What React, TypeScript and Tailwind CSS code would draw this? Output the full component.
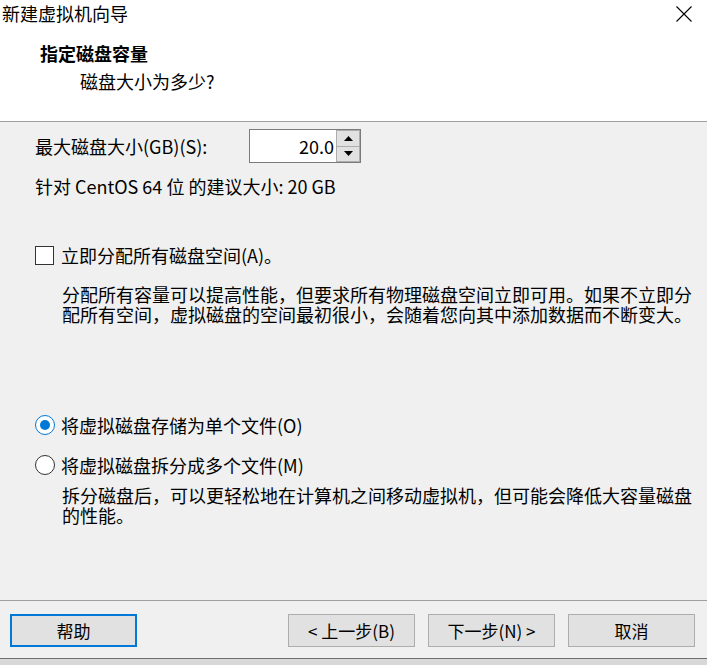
import React from 'react';

const Btn: React.FC<{ label: string; focused?: boolean }> = ({ label, focused }) => (
  <button
    className={
      focused
        ? 'w-[127px] h-[33px] bg-[#e1e1e1] border-2 border-[#0078d7] text-[17px] text-black flex items-center justify-center'
        : 'w-[127px] h-[33px] bg-[#e1e1e1] border border-[#adadad] text-[17px] text-black flex items-center justify-center'
    }
  >
    {label}
  </button>
);

const Radio: React.FC<{ checked?: boolean }> = ({ checked }) => (
  <span
    className={
      checked
        ? 'w-[20px] h-[20px] rounded-full border border-[#0078d7] bg-white flex items-center justify-center'
        : 'w-[20px] h-[20px] rounded-full border border-[#333333] bg-white flex items-center justify-center'
    }
  >
    {checked && <span className="w-[10px] h-[10px] rounded-full bg-[#0078d7]" />}
  </span>
);

export default function App() {
  return (
    <div className="w-[707px] h-[665px] flex flex-col bg-[#f0f0f0] text-black font-['Noto_Sans_CJK_SC','Noto_Sans',sans-serif]">
      {/* header */}
      <div className="h-[121px] bg-white flex flex-col">
        <div className="h-[27px] flex items-center justify-between pl-[2px] pr-[15px]">
          <span className="text-[18px] leading-[27px]">新建虚拟机向导</span>
          <svg width="16" height="16" viewBox="0 0 16 16" className="mt-[1px]">
            <path d="M0.5 0.5 L15.5 15.5 M15.5 0.5 L0.5 15.5" stroke="#000" strokeWidth="1.1" fill="none" />
          </svg>
        </div>
        <div className="pl-[40px] mt-[14px] text-[18px] font-bold leading-[24px]">指定磁盘容量</div>
        <div className="pl-[80px] mt-[4px] text-[18px] leading-[24px]">磁盘大小为多少?</div>
      </div>
      <div className="h-px bg-[#a0a0a0]" />

      {/* content */}
      <div className="flex-1 flex flex-col pl-[35px] text-[18px]">
        <div className="mt-[7px] flex items-center h-[34px]">
          <span className="w-[214px] leading-[20px]">最大磁盘大小(GB)(S):</span>
          <div className="flex h-[34px] w-[112px] border border-[#7a7a7a] bg-white">
            <div className="flex-1 flex items-center justify-end pr-[2px] text-[18px]">20.0</div>
            <div className="w-[24px] flex flex-col">
              <div className="flex-1 bg-[#e1e1e1] border border-[#adadad] flex items-center justify-center">
                <svg width="9" height="5" viewBox="0 0 9 5"><path d="M0 5 L4.5 0 L9 5 Z" fill="#000" /></svg>
              </div>
              <div className="flex-1 bg-[#e1e1e1] border border-[#adadad] border-t-0 flex items-center justify-center">
                <svg width="9" height="5" viewBox="0 0 9 5"><path d="M0 0 L4.5 5 L9 0 Z" fill="#000" /></svg>
              </div>
            </div>
          </div>
        </div>

        <div className="mt-[13px] leading-[20px]">针对 CentOS 64 位 的建议大小: 20 GB</div>

        <div className="mt-[49px] flex items-center gap-[7px] h-[20px]">
          <span className="w-[19px] h-[19px] border border-[#333333] bg-white" />
          <span className="leading-[20px]">立即分配所有磁盘空间(A)。</span>
        </div>
        <div className="mt-[19px] pl-[27px] leading-[20px] whitespace-nowrap">
          <div>分配所有容量可以提高性能，但要求所有物理磁盘空间立即可用。如果不立即分</div>
          <div>配所有空间，虚拟磁盘的空间最初很小，会随着您向其中添加数据而不断变大。</div>
        </div>

        <div className="mt-[91px] flex items-center gap-[6px] h-[20px]">
          <Radio checked />
          <span className="leading-[20px]">将虚拟磁盘存储为单个文件(O)</span>
        </div>
        <div className="mt-[20px] flex items-center gap-[6px] h-[20px]">
          <Radio />
          <span className="leading-[20px]">将虚拟磁盘拆分成多个文件(M)</span>
        </div>
        <div className="mt-[10px] pl-[27px] leading-[20px] whitespace-nowrap">
          <div>拆分磁盘后，可以更轻松地在计算机之间移动虚拟机，但可能会降低大容量磁盘</div>
          <div>的性能。</div>
        </div>
      </div>

      {/* footer */}
      <div className="h-px bg-[#a0a0a0]" />
      <div className="h-[57px] flex items-start pt-[13px] pl-[10px] pr-[12px]">
        <Btn label="帮助" focused />
        <div className="ml-auto flex gap-[13px]">
          <Btn label="< 上一步(B)" />
          <Btn label="下一步(N) >" />
          <Btn label="取消" />
        </div>
      </div>
      <div className="h-px bg-[#6e6e6e]" />
      <div className="h-[6px] bg-[#d8d8d8]" />
    </div>
  );
}
